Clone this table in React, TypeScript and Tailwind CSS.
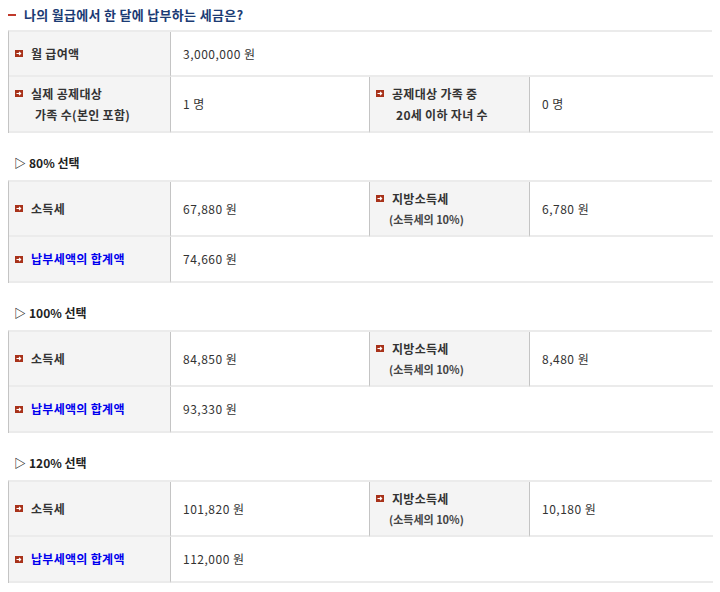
import React from 'react'

const font = { fontFamily: '"Noto Sans CJK KR", "Noto Sans", sans-serif' }

function Bullet() {
  return (
    <svg width="8" height="7" viewBox="0 0 8 7" className="flex-shrink-0">
      <rect x="0" y="0" width="8" height="7" fill="#a8321a" />
      <path d="M1.5 3.5h4M4 1.8L5.7 3.5 4 5.2" stroke="#fff" strokeWidth="1.1" fill="none" />
    </svg>
  )
}

function Label({ children, blue }: { children: React.ReactNode; blue?: boolean }) {
  return (
    <div className="flex items-center gap-[8px]">
      <Bullet />
      <span className={`text-[12px] font-bold tracking-[0.3px] ${blue ? 'text-[#0000ee]' : 'text-[#333]'}`}>{children}</span>
    </div>
  )
}

const labelCell = 'bg-[#f4f4f4] border-r border-[#c4c4c4] pl-[6px] flex flex-col justify-center border-b-2 border-b-[#ebebeb]'
const valueCell = 'pl-[12px] flex items-center text-[12px] tracking-[0.5px] text-[#333] border-b-2 border-b-[#ebebeb]'
const grid = 'w-[704px] border-l border-[#c4c4c4] border-t-2 border-t-[#ebebeb] grid grid-cols-[162px_198px_161px_183px]'

function TaxTable({ tax, local, total }: { tax: string; local: string; total: string }) {
  return (
    <div className={grid}>
      <div className={`${labelCell} h-[55px]`}>
        <Label>소득세</Label>
      </div>
      <div className={valueCell}>{tax}</div>
      <div className={`${labelCell} border-l border-l-[#c4c4c4]`}>
        <Label>지방소득세</Label>
        <div className="pl-[13px] mt-[3px] text-[11px] font-bold text-[#444]">(소득세의 10%)</div>
      </div>
      <div className={valueCell}>{local}</div>
      <div className={`${labelCell} h-[46px]`}>
        <Label blue>납부세액의 합계액</Label>
      </div>
      <div className={`${valueCell} col-span-3`}>{total}</div>
    </div>
  )
}

function Section({ title, children }: { title: string; children: React.ReactNode }) {
  return (
    <div>
      <div className="h-[47px] flex items-center pl-[6px] pt-[12px] text-[12px] font-bold text-[#222]">
        <span className="mr-[3px]">▷</span>{title}
      </div>
      {children}
    </div>
  )
}

export default function App() {
  return (
    <div className="w-[720px] h-[592px] bg-white overflow-hidden pl-[8px]" style={font}>
      <div className="h-[30px] flex items-center">
        <span className="w-[8px] h-[2px] bg-[#c0392b] mr-[8px]" />
        <span className="text-[13px] font-bold tracking-[0.3px] text-[#1b3b74]">나의 월급에서 한 달에 납부하는 세금은?</span>
      </div>
      <div className={grid}>
        <div className={`${labelCell} h-[45px]`}>
          <Label>월 급여액</Label>
        </div>
        <div className={`${valueCell} col-span-3`}>3,000,000 원</div>
        <div className={`${labelCell} h-[56px]`}>
          <Label>실제 공제대상</Label>
          <div className="pl-[20px] mt-[3px] text-[12px] font-bold tracking-[0.3px] text-[#333]">가족 수(본인 포함)</div>
        </div>
        <div className={valueCell}>1 명</div>
        <div className={`${labelCell} border-l border-l-[#c4c4c4]`}>
          <Label>공제대상 가족 중</Label>
          <div className="pl-[20px] mt-[3px] text-[12px] font-bold tracking-[0.3px] text-[#333]">20세 이하 자녀 수</div>
        </div>
        <div className={valueCell}>0 명</div>
      </div>
      <div className="w-[704px]">
        <Section title="80% 선택">
          <TaxTable tax="67,880 원" local="6,780 원" total="74,660 원" />
        </Section>
        <Section title="100% 선택">
          <TaxTable tax="84,850 원" local="8,480 원" total="93,330 원" />
        </Section>
        <Section title="120% 선택">
          <TaxTable tax="101,820 원" local="10,180 원" total="112,000 원" />
        </Section>
      </div>
    </div>
  )
}
